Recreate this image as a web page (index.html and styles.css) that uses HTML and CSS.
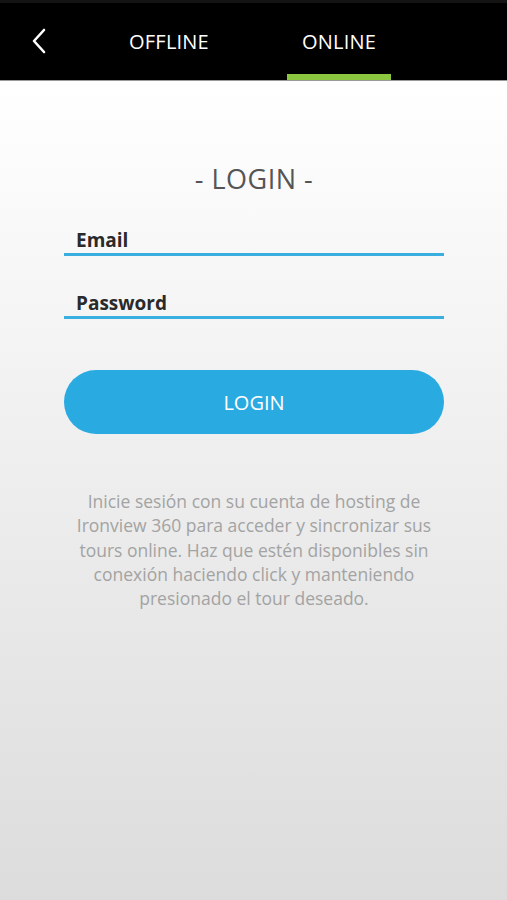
FILE: index.html
```html
<!doctype html>
<html>
<head>
<meta charset="utf-8">
<title>Login</title>
<link rel="stylesheet" href="styles.css">
</head>
<body>
<div class="top">
	<a class="back" href="#"><svg width="16" height="26" viewBox="0 0 16 26"><path d="M13 2 L3 13 L13 24" fill="none" stroke="#fff" stroke-width="2.6" stroke-linecap="round" stroke-linejoin="round"/></svg></a>
	<div class="tab">OFFLINE</div>
	<div class="tab on">ONLINE</div>
</div>
<div class="main">
	<h1>- LOGIN -</h1>
	<div class="field">Email</div>
	<div class="field">Password</div>
	<div class="btn">LOGIN</div>
	<p class="info">Inicie sesión con su cuenta de hosting de Ironview 360 para acceder y sincronizar sus tours online. Haz que estén disponibles sin conexión haciendo click y manteniendo presionado el tour deseado.</p>
</div>
</body>
</html>
```
FILE: styles.css
```css
*{margin:0;padding:0;box-sizing:border-box;}
html,body{height:100%;}
body{font-family:"Open Sans","Noto Sans",sans-serif;background:#e4e4e4;display:flex;flex-direction:column;}
.top{height:81px;background:#000;display:flex;align-items:stretch;border-top:3px solid #141414;border-bottom:1px solid #9a9a9a;}
.back{width:78px;display:flex;align-items:center;justify-content:center;padding-bottom:2px;padding-right:1px;}
.back + .tab{margin-left:39px;}
.tab{width:104px;margin-right:66px;color:#fff;font-size:20px;display:flex;align-items:center;justify-content:center;padding-top:6px;border-bottom:6px solid transparent;letter-spacing:0.2px;}
.tab.on{border-bottom-color:#8cc53f;}
.main{flex:1;background:linear-gradient(#fff 0%,#ededed 50%,#dcdcdc 100%);padding:78px 63px 0 64px;display:flex;flex-direction:column;}
h1{font-weight:normal;font-size:27px;color:#555;text-align:center;letter-spacing:0.5px;line-height:40px;margin-bottom:29px;}
.field{font-weight:bold;font-size:19px;color:#2a2a2a;padding-left:12px;line-height:25px;border-bottom:3px solid #3aaede;margin-bottom:35px;}
.btn{margin-top:16px;height:64px;border-radius:32px;background:#29abe2;color:#fff;font-size:20px;display:flex;align-items:center;justify-content:center;}
.info{margin:55px 0 0 0;text-align:center;color:#a3a3a3;font-size:17.5px;line-height:24.3px;}
```
